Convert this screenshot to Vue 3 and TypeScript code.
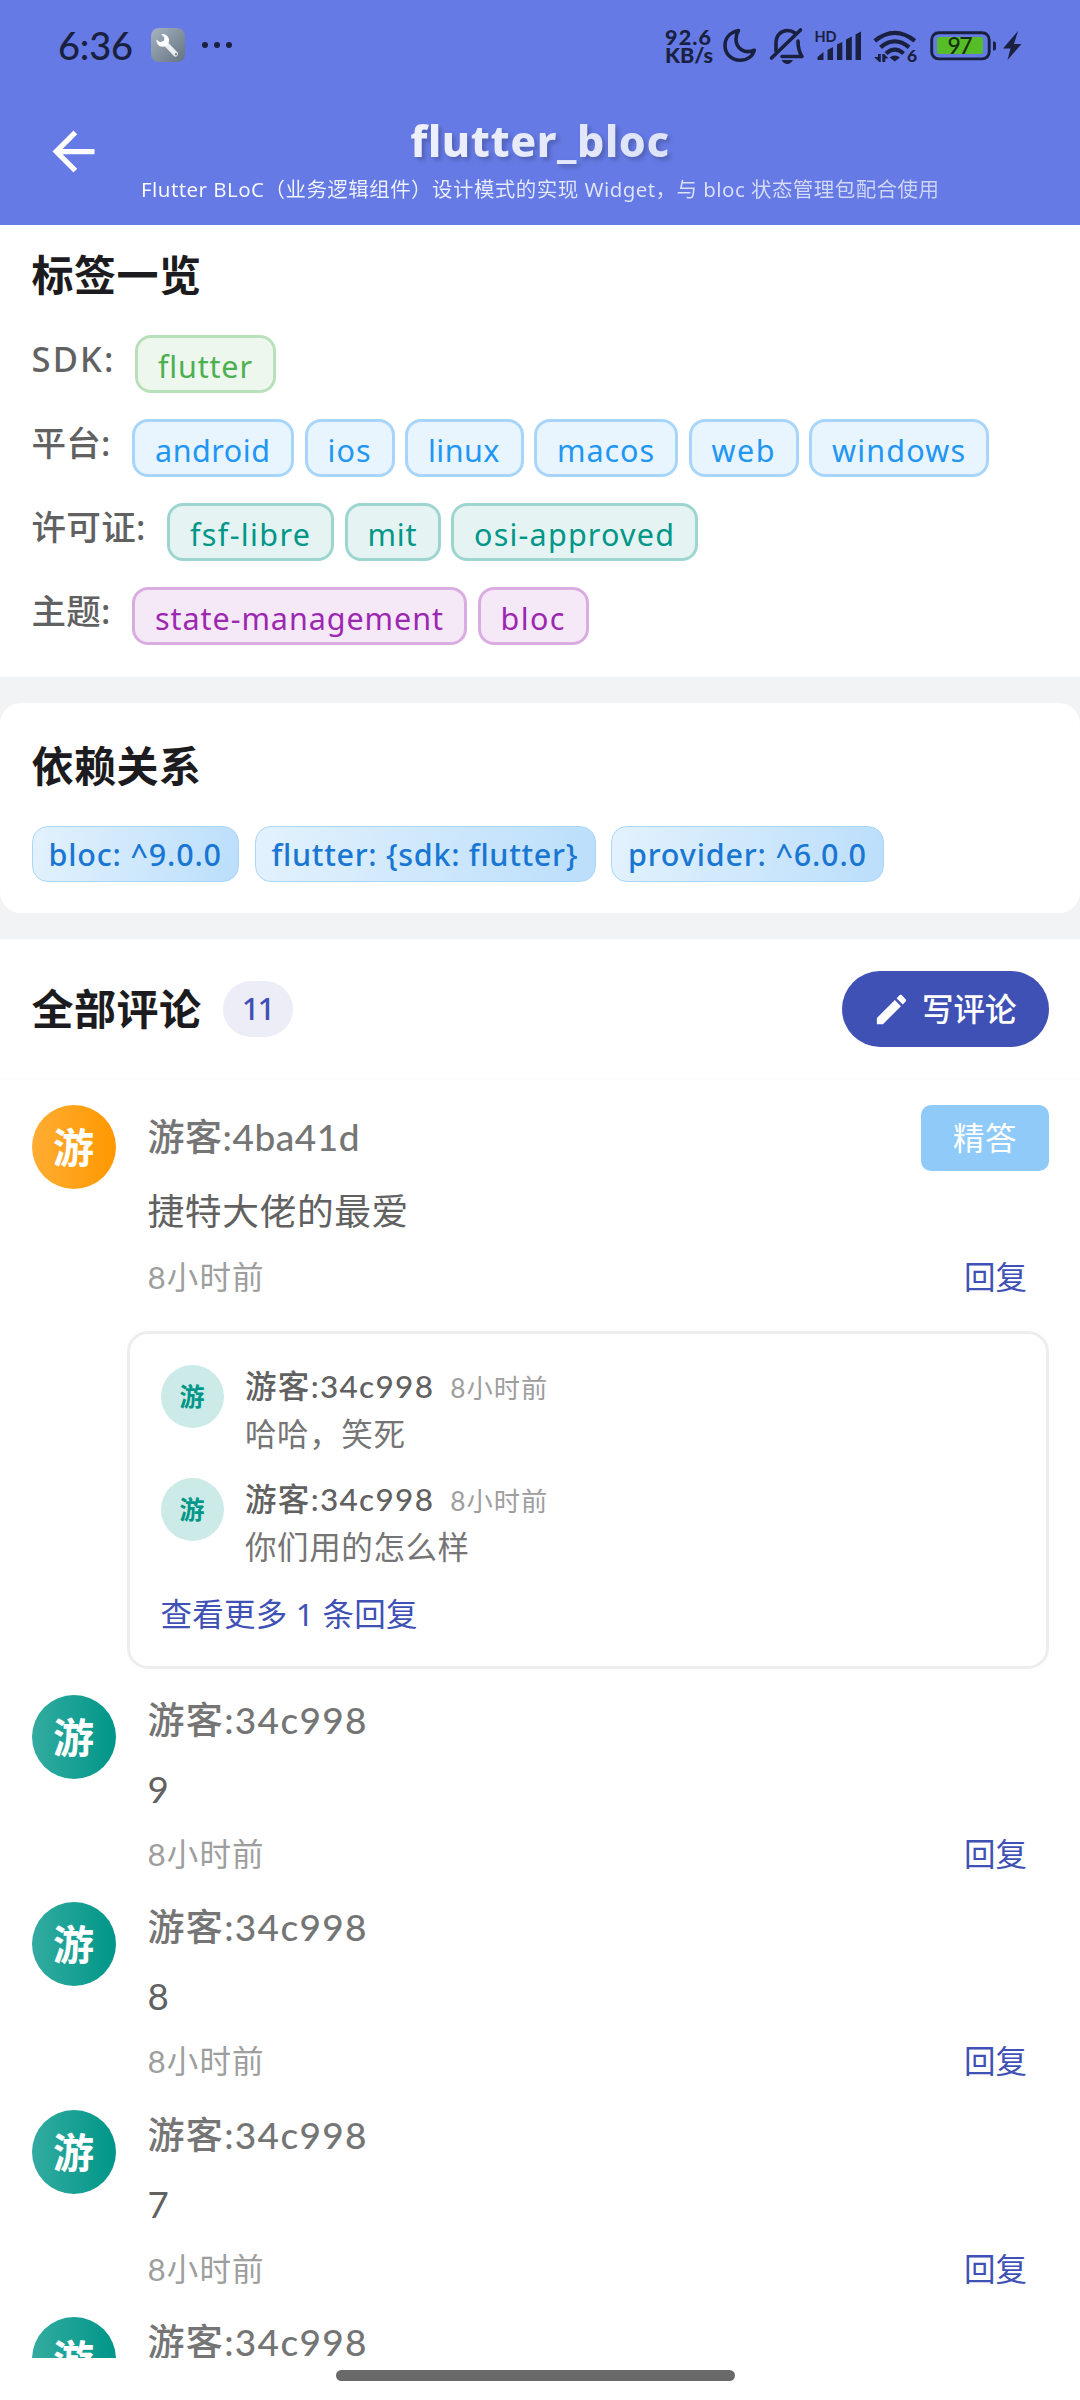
<script setup lang="ts">
import type { Directive } from 'vue'

interface Chip { text: string; width: number }
interface TagRow { label: string; labelWidth: number; tone: string; chips: Chip[] }
interface Reply { name: string; time: string; text: string }
interface Comment {
  name: string
  nameWidth: number
  text: string
  time: string
  tone: string
  featured?: boolean
  replies?: Reply[]
}

// Spreads the letters of a single-line label over the given advance width.
const vTrack: Directive<HTMLElement, number> = {
  mounted(el, binding) {
    const range = document.createRange()
    range.selectNodeContents(el)
    const natural = range.getBoundingClientRect().width
    const count = (el.textContent ?? '').length
    if (count > 1) {
      el.style.letterSpacing = `${((binding.value - natural) / (count - 1)).toFixed(3)}px`
    }
  },
}

const tagRows: TagRow[] = [
  { label: 'SDK:', labelWidth: 82, tone: 'green', chips: [{ text: 'flutter', width: 141 }] },
  {
    label: '平台:', labelWidth: 79, tone: 'blue',
    chips: [
      { text: 'android', width: 162 },
      { text: 'ios', width: 90 },
      { text: 'linux', width: 118.5 },
      { text: 'macos', width: 144 },
      { text: 'web', width: 110 },
      { text: 'windows', width: 180 },
    ],
  },
  {
    label: '许可证:', labelWidth: 114, tone: 'teal',
    chips: [
      { text: 'fsf-libre', width: 167 },
      { text: 'mit', width: 96 },
      { text: 'osi-approved', width: 247 },
    ],
  },
  {
    label: '主题:', labelWidth: 79, tone: 'purple',
    chips: [
      { text: 'state-management', width: 335 },
      { text: 'bloc', width: 111 },
    ],
  },
]

const deps: Chip[] = [
  { text: 'bloc: ^9.0.0', width: 207.5 },
  { text: 'flutter: {sdk: flutter}', width: 341 },
  { text: 'provider: ^6.0.0', width: 273 },
]

const comments: Comment[] = [
  {
    name: '游客:4ba41d', nameWidth: 212, text: '捷特大佬的最爱', time: '8小时前', tone: 'orange', featured: true,
    replies: [
      { name: '游客:34c998', time: '8小时前', text: '哈哈，笑死' },
      { name: '游客:34c998', time: '8小时前', text: '你们用的怎么样' },
    ],
  },
  { name: '游客:34c998', nameWidth: 219, text: '9', time: '8小时前', tone: 'teal' },
  { name: '游客:34c998', nameWidth: 219, text: '8', time: '8小时前', tone: 'teal' },
  { name: '游客:34c998', nameWidth: 219, text: '7', time: '8小时前', tone: 'teal' },
  { name: '游客:34c998', nameWidth: 219, text: '', time: '', tone: 'teal' },
]
</script>

<template>
  <div class="screen">
    <header class="top">
      <div class="status">
        <span class="clock" v-track="75">6:36</span>
        <svg class="tool" viewBox="0 0 34 34">
          <defs>
            <linearGradient id="toolBg" x1="0" y1="0" x2="1" y2="1">
              <stop offset="0" stop-color="#a6b3c0" />
              <stop offset="1" stop-color="#64717f" />
            </linearGradient>
          </defs>
          <rect width="34" height="34" rx="8" fill="url(#toolBg)" />
          <path d="M14 15 L24.5 26" stroke="#eceef0" stroke-width="5" stroke-linecap="round" />
          <path d="M10.2 6.2 A6.4 6.4 0 1 1 5.4 11.4 L9 14.2 L13 12.8 L13.4 9.6 Z" fill="#fff" />
          <circle cx="25" cy="26.3" r="1.2" fill="#7d8995" />
        </svg>
        <svg class="dots" viewBox="0 0 30 6"><circle cx="3" cy="3" r="3" /><circle cx="15" cy="3" r="3" /><circle cx="27" cy="3" r="3" /></svg>
        <div class="status-right">
          <div class="speed"><span v-track="46">92.6</span><span v-track="48">KB/s</span></div>
          <svg class="indicators" viewBox="720 20 304 50">
            <g fill="none" stroke="#1a2040" stroke-width="3.6" stroke-linecap="round" stroke-linejoin="round">
              <path d="M738.5 30.5 C729 32.5 725 39 725 45.5 C725 54 731.500 60.300 740 60.300 C747 60.300 752.500 56.500 754.300 50.200 C744.500 54.500 736 48 736 39.500 C736 36 736.800 33 738.500 30.500 Z" />
              <path d="M776 51 V43 C776 35 781.500 30.500 787.500 30.500 C790.500 30.500 793 31.500 795 33" />
              <path d="M771.500 58 L800.500 30" />
              <path d="M798 41 C798 48 799 52 802 56.500 H782" />
            </g>
            <g fill="#1a2040">
              <path d="M781.500 60 H793 Q790.500 64 787.200 64 Q784 64 781.500 60 Z" />
              <path d="M817.500 60 V57 L823.500 52 V60 Z" />
              <path d="M827.500 60 V50 L833 47 V60 Z" />
              <path d="M837 60 V44.500 L842.300 42 V60 Z" />
              <path d="M846 60 V39.500 L851.800 36.500 V60 Z" />
              <path d="M855.500 60 V34.500 L861 31.500 V60 Z" />
              <path d="M889.500 57.500 Q894.800 53.500 900 57.500 L894.800 61.500 Z" />
              <path d="M878 54 h2.800 v8 h-1.500 l-5.300 -5 h4 Z M882.300 62 v-8 h1.800 l4.500 4.500 h-3.300 v3.500 Z" />
              <path d="M1018 31 L1003 48.500 H1010.500 L1007.500 60 L1021.500 44 H1014 Z" />
              <path d="M993 41.500 h1 a2 2 0 0 1 2 2 v5 a2 2 0 0 1 -2 2 h-1 Z" />
            </g>
            <g fill="none" stroke="#1a2040" stroke-width="4.200" stroke-linecap="butt">
              <path d="M874.800 40.800 Q894.800 24.800 914.800 40.800" />
              <path d="M880.500 47.300 Q894.800 35.500 909.100 47.300" />
              <path d="M886 53.500 Q894.800 45.800 903.600 53.500" />
            </g>
            <rect x="931.700" y="32.700" width="57.500" height="26.200" rx="7" fill="none" stroke="#1a2040" stroke-width="2.900" />
            <rect x="937" y="37" width="46" height="17" rx="2" fill="#56bd28" />
            <text x="814.500" y="42" font-size="14.500" font-weight="700" fill="#1a2040" textLength="22">HD</text>
            <text x="907" y="62" font-size="17.500" font-weight="900" fill="#1a2040">6</text>
            <text x="947.500" y="53.500" font-size="23" font-weight="500" fill="#16300f" textLength="25">97</text>
          </svg>
        </div>
      </div>
      <div class="bar">
        <svg class="back" viewBox="0 0 24 24"><path d="M20 11H7.830l5.590-5.590L12 4l-8 8 8 8 1.410-1.410L7.830 13H20v-2z" fill="#fff" /></svg>
        <div class="titles">
          <h1><span v-track="259">flutter_bloc</span></h1>
          <p><span v-track="798">Flutter BLoC（业务逻辑组件）设计模式的实现 Widget，与 bloc 状态管理包配合使用</span></p>
        </div>
      </div>
    </header>

    <main class="content">
      <section class="tags">
        <h2>标签一览</h2>
        <div v-for="row in tagRows" :key="row.label" class="tag-row">
          <span class="label" :style="{ width: row.labelWidth + 'px' }"><span v-track="row.labelWidth">{{ row.label }}</span></span>
          <div class="chips">
            <span v-for="c in row.chips" :key="c.text" class="chip" :class="row.tone" :style="{ width: c.width + 'px' }">
              <span v-track="c.width - 47">{{ c.text }}</span>
            </span>
          </div>
        </div>
      </section>

      <section class="deps">
        <h2>依赖关系</h2>
        <div class="dep-row">
          <span v-for="d in deps" :key="d.text" class="dep" :style="{ width: d.width + 'px' }">
            <span v-track="d.width - 35">{{ d.text }}</span>
          </span>
        </div>
      </section>

      <section class="comments">
        <div class="comments-head">
          <h2>全部评论</h2>
          <span class="count">11</span>
          <button class="write">
            <svg viewBox="0 0 24 24"><path d="M3 17.250V21h3.750L17.810 9.940l-3.750-3.750L3 17.250zM20.710 7.040c.39-.39.39-1.020 0-1.410l-2.340-2.340c-.39-.39-1.020-.39-1.410 0l-1.830 1.830 3.750 3.750 1.830-1.830z" fill="#fff" /></svg>
            <span>写评论</span>
          </button>
        </div>

        <article v-for="(c, i) in comments" :key="i" class="comment" :class="{ featured: c.featured }">
          <div class="avatar" :class="c.tone">游</div>
          <div class="body">
            <div class="name-row">
              <span class="name" v-track="c.nameWidth">{{ c.name }}</span>
              <span v-if="c.featured" class="best">精答</span>
            </div>
            <template v-if="c.text">
              <p class="text">{{ c.text }}</p>
              <div class="meta"><span class="time" v-track="116">{{ c.time }}</span><span class="reply-link">回复</span></div>
            </template>
          </div>
          <div v-if="c.replies" class="replies">
            <div v-for="(r, j) in c.replies" :key="j" class="reply">
              <div class="mini">游</div>
              <div>
                <div class="reply-head">
                  <span class="reply-name" v-track="188">{{ r.name }}</span>
                  <span class="reply-time" v-track="97">{{ r.time }}</span>
                </div>
                <p class="reply-text">{{ r.text }}</p>
              </div>
            </div>
            <span class="more" v-track="257">查看更多 1 条回复</span>
          </div>
        </article>
      </section>
    </main>

    <footer class="nav"><div class="handle"></div></footer>
  </div>
</template>

<style>
body {
  margin: 0;
  background: #fff;
}
</style>

<style scoped>
.screen {
  width: 1080px;
  height: 2400px;
  display: flex;
  flex-direction: column;
  overflow: hidden;
  background: #fff;
  font-family: "Noto Sans", "Noto Sans CJK SC", sans-serif;
  white-space: nowrap;
}
h1, h2, p { margin: 0; }
svg { display: block; flex: none; }

.top {
  height: 225px;
  flex: none;
  background: #657ae4;
}
.status {
  height: 90px;
  display: flex;
  align-items: center;
  padding: 0 56px 0 58px;
  box-sizing: border-box;
  color: #1a2040;
}
.clock {
  width: 93px;
  font-family: Lato, sans-serif;
  font-size: 38px;
  line-height: 50px;
  font-weight: 500;
}
.tool { width: 34px; height: 34px; }
.dots { width: 30px; height: 6px; margin-left: 17px; fill: #1a2040; }
.status-right {
  margin-left: auto;
  display: flex;
  align-items: center;
}
.speed {
  display: flex;
  flex-direction: column;
  width: 55px;
  font-family: Lato, sans-serif;
  font-size: 21.500px;
  line-height: 18px;
  font-weight: 900;
  padding-top: 1px;
}
.indicators { width: 304px; height: 50px; font-family: Lato, sans-serif; }

.bar {
  height: 135px;
  display: flex;
  align-items: flex-start;
}
.back { width: 63px; height: 63px; margin: 30px 0 0 42px; }
.titles { width: 798px; margin: 20px 0 0 36px; text-align: center; }
.titles h1, .titles p {
  color: transparent;
  background: linear-gradient(90deg, #fff, #cdd4f6);
  -webkit-background-clip: text;
  background-clip: text;
}
.titles h1 {
  font-size: 43px;
  line-height: 62px;
  font-weight: 800;
  filter: drop-shadow(3px 3px 2px rgba(0, 0, 0, 0.2));
}
.titles p { font-size: 20.500px; line-height: 34px; text-align: left; }

.content { flex: 1; min-height: 0; overflow: hidden; background: #f2f3f5; }
section { box-sizing: border-box; background: #fff; padding: 0 31px 0 31.500px; }
h2 {
  font-size: 42px;
  line-height: 60px;
  height: 60px;
  font-weight: 700;
  letter-spacing: 0.500px;
  color: #1c1b20;
}

.tags { height: 452px; padding-top: 20px; display: flex; flex-direction: column; gap: 26px; }
.tags h2 { margin-bottom: 4px; }
.tag-row { display: flex; gap: 21.500px; height: 58px; }
.label { font-size: 34.500px; line-height: 48px; font-weight: 500; color: #616161; }
.tag-row .chips { display: flex; gap: 10.500px; }
.chip {
  box-sizing: border-box;
  height: 58px;
  border: 3px solid;
  border-radius: 16px;
  padding: 6px 0 0 20px;
  font-size: 30.500px;
  line-height: 45px;
}
.green { color: #4caf50; background: #edf7ee; border-color: #b8e0ba; }
.blue { color: #2196f3; background: #e8f4fe; border-color: #a8d5fb; }
.chip.teal { color: #009688; background: #e5f4f3; border-color: #9dd6d0; }
.purple { color: #9c27b0; background: #f5e9f7; border-color: #d9ade1; }

.deps { margin-top: 26px; height: 210px; border-radius: 21px; padding-top: 33px; }
.dep-row { display: flex; gap: 15.500px; margin-top: 30px; }
.dep {
  box-sizing: border-box;
  height: 56px;
  border: 1.500px solid #a9d6fb;
  border-radius: 16px;
  background: linear-gradient(100deg, #e3f2fd, #bbdefb) border-box;
  color: #1976d2;
  font-size: 30.500px;
  line-height: 50px;
  font-weight: 500;
  padding: 2px 0 0 16px;
}

.comments { margin-top: 26px; padding-top: 32px; height: 1500px; }
.comments-head {
  display: flex;
  align-items: center;
  height: 76px;
  padding-bottom: 31px;
  border-bottom: 1px solid #fafafa;
  margin: 0 -31px 26px -31.500px;
  padding-left: 31.500px;
  padding-right: 31px;
}
.count {
  margin-left: 21px;
  width: 70px;
  height: 56px;
  line-height: 54px;
  border-radius: 28px;
  background: #ecedf7;
  color: #3f51b5;
  font-size: 31px;
  font-weight: 500;
  letter-spacing: -2px;
  text-align: center;
}
.write {
  margin-left: auto;
  width: 207px;
  height: 76px;
  border: 0;
  border-radius: 38px;
  background: #3f51b5;
  color: #fff;
  display: flex;
  align-items: center;
  padding: 0 0 0 30px;
  font: 500 31.500px/60px "Noto Sans", "Noto Sans CJK SC", sans-serif;
}
.write svg { width: 39px; height: 39px; margin-right: 11px; }

.comment {
  display: grid;
  grid-template-columns: 84px 1fr;
  column-gap: 32px;
  padding-bottom: 28.300px;
}
.avatar {
  width: 84px;
  height: 84px;
  border-radius: 50%;
  color: #fff;
  font-size: 41px;
  line-height: 85px;
  font-weight: 700;
  text-align: center;
}
.avatar.teal { background: linear-gradient(90deg, #33aba0, #009688); }
.avatar.orange { background: linear-gradient(90deg, #ffad33, #ff9800); }
.name-row { display: flex; justify-content: space-between; line-height: 50px; height: 50px; }
.name { font-family: Lato, "Noto Sans CJK SC", sans-serif; font-size: 37px; font-weight: 500; color: #757575; }
.text {
  font-family: Lato, "Noto Sans CJK SC", sans-serif;
  margin-top: 18px;
  font-size: 36.750px;
  line-height: 52px;
  height: 52px;
  letter-spacing: 0.600px;
  color: #616161;
}
.meta {
  display: flex;
  justify-content: space-between;
  margin-top: 19px;
  height: 40px;
  line-height: 40px;
  font-size: 31.500px;
  padding-right: 22px;
}
.time { color: #9e9e9e; font-family: Lato, "Noto Sans CJK SC", sans-serif; }
.reply-link { color: #3f51b5; }
.featured { padding-bottom: 26px; }
.featured .name-row { height: 66px; line-height: 64px; }
.featured .text { margin-top: 14px; }
.featured .meta { margin-top: 20px; }
.best {
  width: 128px;
  height: 66px;
  line-height: 65px;
  border-radius: 10px;
  background: #90caf9;
  color: #fff;
  font-size: 31.500px;
  letter-spacing: 0.500px;
  text-align: center;
}

.replies {
  grid-column: 1 / -1;
  box-sizing: border-box;
  height: 338px;
  margin: 34px 0 0 95px;
  border: 3px solid #ededed;
  border-radius: 21px;
  padding: 31px;
}
.reply { display: flex; gap: 21.500px; height: 113px; }
.mini {
  width: 63px;
  height: 63px;
  border-radius: 50%;
  background: #cceae7;
  color: #009688;
  font-size: 25px;
  line-height: 63px;
  font-weight: 700;
  text-align: center;
}
.reply-head { display: flex; align-items: baseline; gap: 16px; line-height: 43px; height: 43px; }
.reply-name { font-family: Lato, "Noto Sans CJK SC", sans-serif; font-size: 31.500px; font-weight: 500; color: #616161; }
.reply-time { font-family: Lato, "Noto Sans CJK SC", sans-serif; font-size: 26.250px; color: #9e9e9e; }
.reply-text { margin-top: 3px; font-size: 31.500px; line-height: 46px; letter-spacing: 0.600px; color: #757575; }
.more { display: block; font-size: 31.500px; line-height: 46px; color: #3f51b5; }

.nav { flex: none; height: 42px; background: #fff; display: flex; justify-content: center; }
.handle { margin: 12px 9px 0 0; width: 399px; height: 11px; border-radius: 6px; background: #696969; }
</style>
